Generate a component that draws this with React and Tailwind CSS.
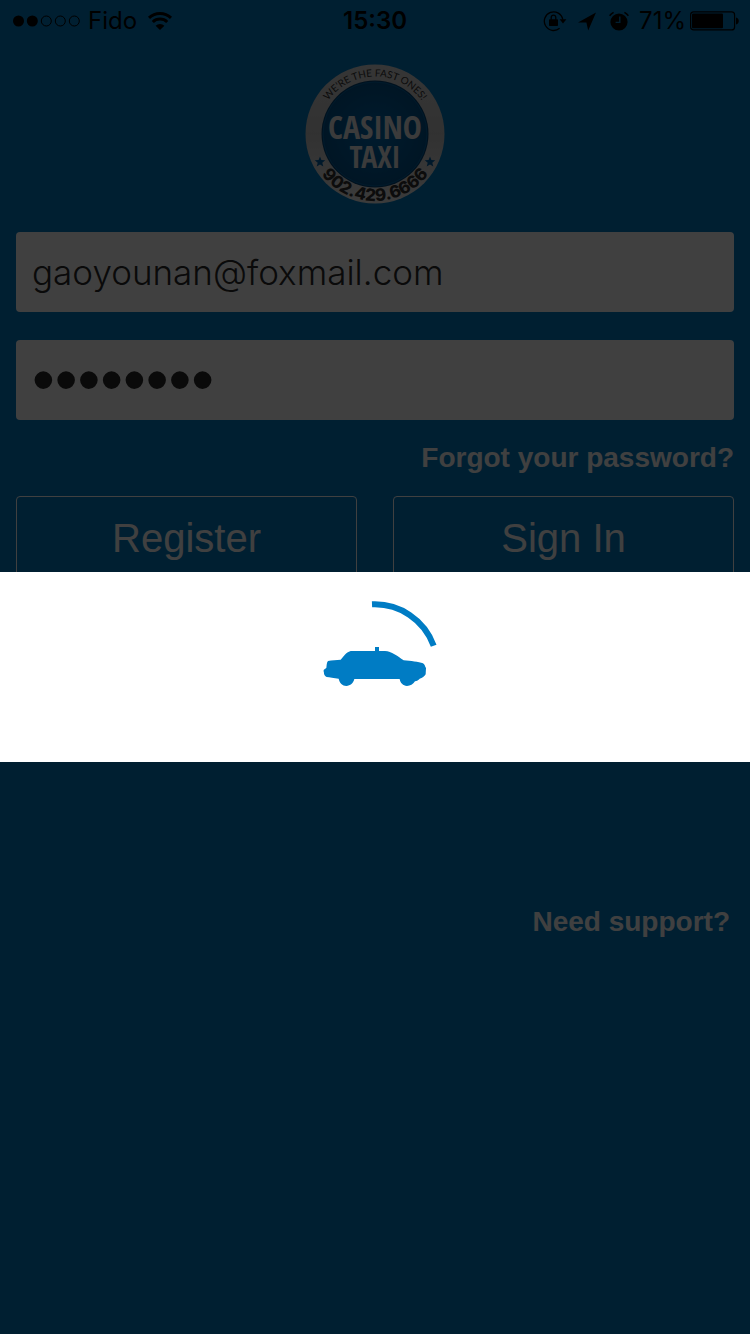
function SignalDots() {
  return (
    <svg viewBox="0 0 68 14" className="h-[14px] w-[68px]" aria-hidden="true">
      <circle cx="6.5" cy="7" r="5.5" />
      <circle cx="20.3" cy="7" r="5.5" />
      <g fill="none" stroke="currentColor" strokeWidth="1">
        <circle cx="34.3" cy="7" r="5" />
        <circle cx="48.3" cy="7" r="5" />
        <circle cx="62.3" cy="7" r="5" />
      </g>
    </svg>
  );
}

function WifiIcon() {
  return (
    <svg viewBox="0 0 26 20" className="h-[20px] w-[26px]" aria-hidden="true">
      <g fill="none" stroke="currentColor" strokeWidth="3">
        <path d="M2 6.8A16 16 0 0 1 24 6.8" />
        <path d="M5.8 11A10.4 10.4 0 0 1 20.2 11" />
      </g>
      <path d="M13 19L8.6 14.8A6.4 6.4 0 0 1 17.4 14.8Z" />
    </svg>
  );
}

function RotationLockIcon() {
  return (
    <svg viewBox="0 0 24 22" className="h-[22px] w-[24px]" aria-hidden="true">
      <path d="M16.6 18.3A9.3 9.3 0 1 1 19.8 9.6" fill="none" stroke="currentColor" strokeWidth="1.3" />
      <path d="M16.6 9.2H23.4L20 13.4Z" />
      <rect x="6" y="9.2" width="9" height="6.8" rx="0.8" />
      <path d="M8.2 9.8V7.4a2.3 2.3 0 0 1 4.6 0V9.8" fill="none" stroke="currentColor" strokeWidth="1.3" />
    </svg>
  );
}

function LocationIcon() {
  return (
    <svg viewBox="0 0 20 20" className="h-[20px] w-[20px]" aria-hidden="true">
      <path d="M19 1.4L1 11.6H9.4L11.2 19.4Z" />
    </svg>
  );
}

function AlarmIcon() {
  return (
    <svg viewBox="0 0 20 20" className="h-[20px] w-[20px]" aria-hidden="true">
      <circle cx="10" cy="11" r="8.6" />
      <path d="M10.8 5.6V11.4H6.6" fill="none" stroke="#007cc4" strokeWidth="1.4" />
      <path d="M.6 4.8A12 12 0 0 1 4.6 1.4M15.4 1.4A12 12 0 0 1 19.4 4.8" fill="none" stroke="currentColor" strokeWidth="1.6" />
    </svg>
  );
}

function BatteryIcon() {
  return (
    <svg viewBox="0 0 50 20" className="h-[20px] w-[50px]" aria-hidden="true">
      <rect x="0.6" y="0.9" width="44" height="18" rx="3" fill="none" stroke="currentColor" strokeWidth="1.2" />
      <rect x="2" y="2.6" width="31" height="14.6" rx="1" />
      <path d="M46 6.4a3.6 3.6 0 0 1 0 7Z" />
    </svg>
  );
}

function StatusBar() {
  return (
    <header className="grid h-10 grid-cols-[1fr_auto_1fr] items-center px-3 pt-0.5 font-['Inter',sans-serif] text-2xl text-black">
      <div className="flex items-center gap-2">
        <SignalDots />
        <span>Fido</span>
        <span className="pl-0.5"><WifiIcon /></span>
      </div>
      <span className="font-semibold">15:30</span>
      <div className="flex items-center justify-end">
        <RotationLockIcon />
        <span className="pl-2.5"><LocationIcon /></span>
        <span className="pr-2.5 pl-3"><AlarmIcon /></span>
        <span>71%</span>
        <span className="-mr-0.5 pl-1"><BatteryIcon /></span>
      </div>
    </header>
  );
}

function Logo() {
  return (
    <svg viewBox="0 0 140 140" className="h-[140px] w-[140px]" role="img" aria-label="Casino Taxi">
      <defs>
        <path id="top-arc" d="M12.5 70A57.5 57.5 0 0 1 127.5 70" />
        <path id="bottom-arc" d="M3 70A67 67 0 0 0 137 70" />
        <linearGradient id="ring" x1="0" y1="0" x2="0" y2="1">
          <stop offset="0" stopColor="#d6d6d6" />
          <stop offset="0.5" stopColor="#c4c4c4" />
          <stop offset="1" stopColor="#ececec" />
        </linearGradient>
        <radialGradient id="disc" cx="0.5" cy="0.5" r="0.5">
          <stop offset="0" stopColor="#006cb4" />
          <stop offset="1" stopColor="#005590" />
        </radialGradient>
      </defs>
      <circle cx="70" cy="70" r="69.5" fill="url(#ring)" />
      <circle cx="70" cy="70" r="53.5" fill="#004478" />
      <circle cx="70" cy="70" r="52" fill="url(#disc)" stroke="#0070b8" strokeWidth="0.8" />
      <text fontSize="10" fill="#333333" textAnchor="middle" className="font-['Lato',sans-serif]">
        <textPath href="#top-arc" startOffset="50%">WE’RE THE FAST ONES!</textPath>
      </text>
      <text fontSize="17" fill="#333333" textAnchor="middle" className="font-['Inter',sans-serif] font-extrabold">
        <textPath href="#bottom-arc" startOffset="50%">902.429.6666</textPath>
      </text>
      <g fill="#ececec" textAnchor="middle" className="font-['Open_Sans_Condensed','Roboto_Condensed','Liberation_Sans_Narrow',sans-serif] font-semibold">
        <text x="70" y="75" fontSize="32">CASINO</text>
        <text x="70" y="104" fontSize="30">TAXI</text>
      </g>
      <g fill="#0060a8">
        <path id="star" d="M15 92.4l1.4 3.6 3.9.2-3 2.5 1 3.7-3.3-2-3.3 2 1-3.7-3-2.5 3.9-.2z" />
        <use href="#star" x="110" />
      </g>
    </svg>
  );
}

function LoadingBand() {
  return (
    <div className="fixed inset-0 flex items-center bg-black/75">
      <div role="status" aria-label="Loading" className="flex w-full justify-center bg-white py-[25px] text-[#007cc4]">
        <svg viewBox="0 0 420 420" className="h-[140px] w-[140px]" fill="currentColor" aria-hidden="true">
          <path d="M201 22A188 188 0 0 1 386 146" fill="none" stroke="currentColor" strokeWidth="18" />
          <g transform="translate(15 -21)">
            <path d="M195 171H207V183H225C245 184 262 198 281 211C302 213 326 215 339 220C346 225 344 229 348 234L347 253C343 260 337 264 329 266C325 271 321 273 315 274C309 283 301 288 291 288C279 287 271 279 269 267H133C130 280 121 287 109 288C97 287 89 279 86 266C72 264 58 262 50 261C44 259 44 254 42 252C43 248 40 246 41 240C43 237 46 237 49 234C50 226 50 217 54 213C66 210 79 210 92 209C101 200 107 187 122 183H195Z" />
          </g>
        </svg>
      </div>
    </div>
  );
}

const fieldClass = "block h-20 w-full rounded bg-white px-4 text-[#2b2b2b] outline-none";
const buttonClass = "h-20 rounded border border-white pt-1 text-[40px] leading-none";

export default function App() {
  return (
    <div className="flex min-h-screen flex-col bg-[#007cc4] font-['Liberation_Sans',Arial,sans-serif] text-white">
      <StatusBar />
      <main className="px-4 pt-6">
        <div className="flex justify-center">
          <Logo />
        </div>
        <form className="pt-7" onSubmit={(event) => event.preventDefault()}>
          <div className="flex flex-col gap-7">
            <input
              type="email"
              aria-label="Email"
              defaultValue="gaoyounan@foxmail.com"
              className={`${fieldClass} font-['Inter',sans-serif] text-[35px] font-light`}
            />
            <input
              type="password"
              aria-label="Password"
              defaultValue="password"
              className={`${fieldClass} text-[65px]`}
            />
          </div>
          <div className="flex justify-end pt-5 text-[28px] leading-9 font-bold">
            <a href="#forgot">Forgot your password?</a>
          </div>
          <div className="grid grid-cols-2 gap-9 pt-5">
            <button type="button" className={buttonClass}>Register</button>
            <button type="submit" className={buttonClass}>Sign In</button>
          </div>
        </form>
      </main>
      <footer className="flex justify-end px-5 pt-[328px] text-[28px] leading-9 font-bold">
        <a href="#support">Need support?</a>
      </footer>
      <LoadingBand />
    </div>
  );
}
